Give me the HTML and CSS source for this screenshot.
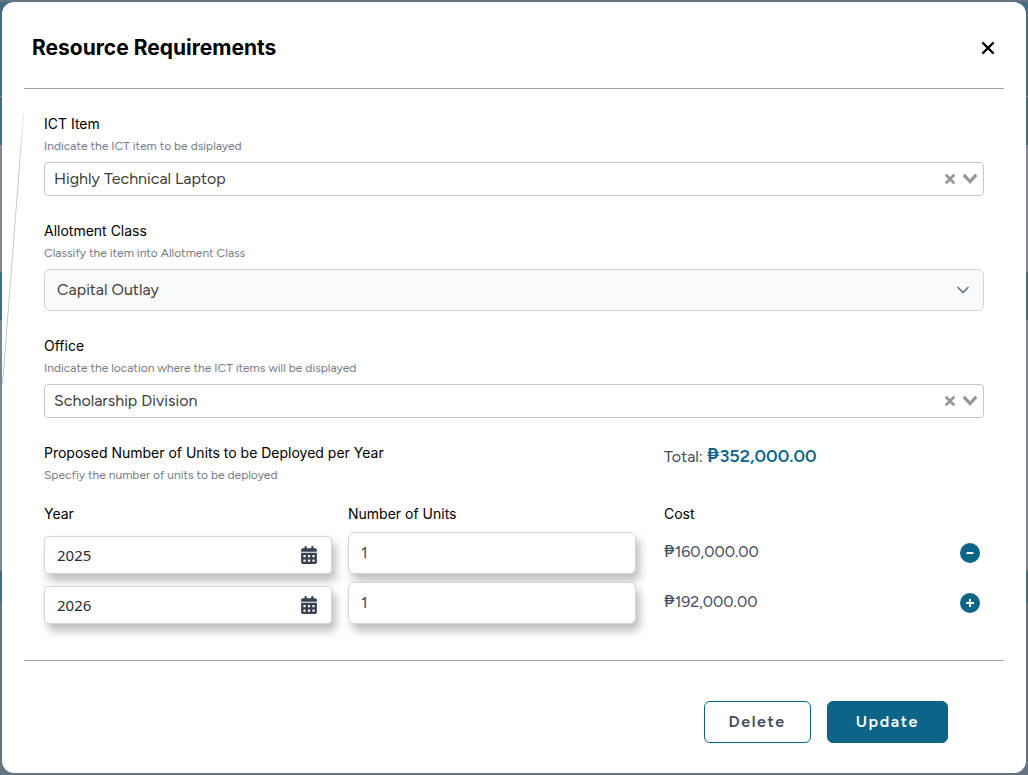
FILE: index.html
```html
<!DOCTYPE html>
<html lang="en">
<head>
<meta charset="utf-8">
<meta name="viewport" content="width=device-width, initial-scale=1">
<title>Resource Requirements</title>
<link rel="stylesheet" href="styles.css">
</head>
<body>
<svg class="defs" aria-hidden="true">
  <symbol id="clear" viewBox="0 0 10 10"><path d="M6.895455 5l2.842897-2.842898c.348864-.348863.348864-.914488 0-1.263636L9.106534.261648c-.348864-.348864-.914489-.348864-1.263636 0L5 3.104545 2.157102.261648c-.348863-.348864-.914488-.348864-1.263636 0L.261648.893466c-.348864.348864-.348864.914489 0 1.263636L3.104545 5 .261648 7.842898c-.348864.348863-.348864.914488 0 1.263636l.631818.631818c.348864.348864.914773.348864 1.263636 0L5 6.895455l2.842898 2.842897c.348863.348864.914772.348864 1.263636 0l.631818-.631818c.348864-.348864.348864-.914489 0-1.263636L6.895455 5z"/></symbol>
  <symbol id="open" viewBox="0 0 14 10"><path d="M9.211364 7.59931l4.48338-4.867229c.407008-.441854.407008-1.158247 0-1.60046l-.73712-.80023c-.407008-.441854-1.066904-.441854-1.474243 0L7 5.198617 2.51662.33139c-.407008-.441853-1.066904-.441853-1.474243 0l-.737121.80023c-.407008.441854-.407008 1.158248 0 1.600461l4.48338 4.867228L7 10l2.211364-2.40069z"/></symbol>
  <symbol id="calendar" viewBox="0 0 448 512"><path d="M128 0c17.700 0 32 14.300 32 32V64H288V32c0-17.700 14.300-32 32-32s32 14.300 32 32V64h48c26.500 0 48 21.500 48 48v48H0V112C0 85.500 21.500 64 48 64H96V32c0-17.700 14.300-32 32-32zM0 192H448V464c0 26.500-21.500 48-48 48H48c-26.500 0-48-21.500-48-48V192zm64 80v32c0 8.800 7.200 16 16 16h32c8.800 0 16-7.200 16-16V272c0-8.800-7.200-16-16-16H80c-8.800 0-16 7.200-16 16zm128 0v32c0 8.800 7.200 16 16 16h32c8.800 0 16-7.200 16-16V272c0-8.800-7.200-16-16-16H208c-8.800 0-16 7.200-16 16zm144-16c-8.800 0-16 7.200-16 16v32c0 8.800 7.200 16 16 16h32c8.800 0 16-7.200 16-16V272c0-8.800-7.200-16-16-16H336zM64 400v32c0 8.800 7.200 16 16 16h32c8.800 0 16-7.200 16-16V400c0-8.800-7.200-16-16-16H80c-8.800 0-16 7.200-16 16zm144-16c-8.800 0-16 7.200-16 16v32c0 8.800 7.200 16 16 16h32c8.800 0 16-7.200 16-16V400c0-8.800-7.200-16-16-16H208zm112 16v32c0 8.800 7.200 16 16 16h32c8.800 0 16-7.200 16-16V400c0-8.800-7.200-16-16-16H336c-8.800 0-16 7.200-16 16z"/></symbol>
</svg>
<main class="modal" role="dialog" aria-labelledby="title">
  <svg class="edge-line" viewBox="0 0 22 272" aria-hidden="true"><defs><linearGradient id="fade" x1="0" y1="0" x2="0" y2="1"><stop offset="0" stop-color="#e8e8ea"/><stop offset=".2" stop-color="#c8c8ca"/></linearGradient></defs><path d="M21.500 0L.5 270" fill="none" stroke="url(#fade)"/></svg>
  <header class="modal-header">
    <h1 id="title" class="title">Resource Requirements</h1>
    <button class="icon-button close" type="button" aria-label="Close"><svg viewBox="0 0 14 14" width="14" height="14"><path d="M2 2l10 10M12 2L2 12" fill="none" stroke="#000" stroke-width="2.400" stroke-linecap="round"/></svg></button>
  </header>
  <form>
    <div class="modal-body">
      <div class="field">
        <label class="label" for="item">ICT Item</label>
        <p class="hint">Indicate the ICT item to be dsiplayed</p>
        <div class="combo">
          <input id="item" class="combo-input" type="text" role="combobox" aria-expanded="false" value="Highly Technical Laptop">
          <button class="icon-button" type="button" aria-label="Clear item"><svg width="10" height="10"><use href="#clear"/></svg></button>
          <button class="icon-button" type="button" aria-label="Open item list"><svg width="14" height="10"><use href="#open"/></svg></button>
        </div>
      </div>
      <div class="field">
        <label class="label" for="class">Allotment Class</label>
        <p class="hint">Classify the item into Allotment Class</p>
        <div class="select-wrap">
          <select id="class" class="select"><option>Capital Outlay</option></select>
          <svg class="select-arrow" width="12" height="8" viewBox="0 0 12 8" aria-hidden="true"><path d="M1 1.500l5 5 5-5" fill="none" stroke="#6b7280" stroke-width="1.700" stroke-linecap="round" stroke-linejoin="round"/></svg>
        </div>
      </div>
      <div class="field">
        <label class="label" for="office">Office</label>
        <p class="hint">Indicate the location where the ICT items will be displayed</p>
        <div class="combo">
          <input id="office" class="combo-input" type="text" role="combobox" aria-expanded="false" value="Scholarship Division">
          <button class="icon-button" type="button" aria-label="Clear office"><svg width="10" height="10"><use href="#clear"/></svg></button>
          <button class="icon-button" type="button" aria-label="Open office list"><svg width="14" height="10"><use href="#open"/></svg></button>
        </div>
      </div>
      <section class="units">
        <div class="columns">
          <div class="wide">
            <h2 class="label">Proposed Number of Units to be Deployed per Year</h2>
            <p class="hint">Specfiy the number of units to be deployed</p>
          </div>
          <p class="total">Total: <strong class="amount">₱352,000.00</strong></p>
        </div>
        <div class="rows">
          <div class="columns">
            <span class="label" id="year">Year</span>
            <span class="label" id="count">Number of Units</span>
            <span class="label indent">Cost</span>
          </div>
          <div class="columns">
            <div class="year"><input class="year-input" type="text" aria-labelledby="year" value="2025"><button class="icon-button" type="button" aria-label="Pick year"><svg width="16" height="18"><use href="#calendar"/></svg></button></div>
            <input class="count" type="text" inputmode="numeric" aria-labelledby="count" value="1">
            <div class="cost"><span class="price">₱160,000.00</span><button class="round" type="button" aria-label="Remove year"><svg viewBox="0 0 20 20" width="20" height="20"><path d="M6.500 10h7" stroke="#fff" stroke-width="2"/></svg></button></div>
          </div>
          <div class="columns">
            <div class="year"><input class="year-input" type="text" aria-labelledby="year" value="2026"><button class="icon-button" type="button" aria-label="Pick year"><svg width="16" height="18"><use href="#calendar"/></svg></button></div>
            <input class="count" type="text" inputmode="numeric" aria-labelledby="count" value="1">
            <div class="cost"><span class="price">₱192,000.00</span><button class="round" type="button" aria-label="Add year"><svg viewBox="0 0 20 20" width="20" height="20"><path d="M6 10h8M10 6v8" stroke="#fff" stroke-width="2"/></svg></button></div>
          </div>
        </div>
      </section>
    </div>
    <footer class="actions">
      <button class="button outline" type="button">Delete</button>
      <button class="button primary" type="submit">Update</button>
    </footer>
  </form>
</main>
</body>
</html>
```
FILE: styles.css
```css
* { box-sizing: border-box; }
body {
  margin: 0;
  padding: 2px;
  min-height: 100vh;
  color: #414b5a;
  font: 16px/24px Figtree, Inter, sans-serif;
  background: linear-gradient(#667481 2px, #406d84 2px 96px, #8795a3 96px 97px, #406d84 97px 145px, #858596 145px 272px, #406d84 272px 320px, #788594 320px 571px, #406d84 571px 603px, #667481 603px);
}
h1, h2, p { margin: 0; font-weight: 400; }
input, select, button { margin: 0; font: inherit; color: inherit; }
button { cursor: pointer; }
svg { display: block; fill: currentColor; }
.defs { position: absolute; width: 0; height: 0; }
.modal {
  position: relative;
  padding: 0 22px 30px;
  border-radius: 12px;
  background: #fff;
}
.edge-line { position: absolute; top: 112px; left: 0; width: 22px; height: 272px; }
.modal-header {
  display: flex;
  align-items: center;
  justify-content: space-between;
  padding: 32px 8px 26px;
  border-bottom: 1px solid #9ca3af;
}
.title { color: #000; font: 700 21px/28px Inter, sans-serif; }
.icon-button { padding: 0; border: 0; background: none; color: #374151; }
.close { padding: 1px; }
.modal-body {
  display: grid;
  gap: 25px;
  padding: 25px 20px 36px;
  border-bottom: 1px solid #9ca3af;
}
.label { display: block; color: #000; font: 400 14px/20px Inter, sans-serif; }
.hint { margin-top: 4px; color: #747b88; font-size: 12px; line-height: 16px; }
.combo {
  display: flex;
  align-items: center;
  gap: 8px;
  height: 34px;
  margin-top: 8px;
  padding: 0 6px 0 9px;
  border: 1px solid #c6c6c6;
  border-radius: 4px;
}
.combo .icon-button { color: #979797; }
.combo-input { flex: 1; min-width: 0; padding: 0; border: 0; background: none; color: #3d3d3d; }
.select-wrap { display: grid; align-items: center; margin-top: 8px; }
.select {
  grid-area: 1 / 1;
  width: 100%;
  height: 42px;
  padding: 0 40px 0 12px;
  border: 1px solid #d1d5db;
  border-radius: 6px;
  appearance: none;
  background: #f9fafb;
  color: #404040;
}
.select-arrow { grid-area: 1 / 1; justify-self: end; margin-right: 15px; pointer-events: none; }
.units { display: grid; gap: 21px; }
.columns { display: grid; grid-template-columns: 72fr 72fr 83fr; gap: 16px; }
.wide { grid-column: span 2; }
.total { padding-left: 12px; line-height: 26px; }
.amount { color: #0c6587; font-size: 18px; font-weight: 600; }
.rows { display: grid; gap: 8px; }
.indent { padding-left: 12px; }
.year, .count {
  min-width: 0;
  border: 1px solid #d1d5db;
  background: #fff;
  box-shadow: 4px 7px 8px rgba(0, 0, 0, .25);
}
.year {
  display: flex;
  align-items: center;
  align-self: end;
  height: 38px;
  padding: 0 14px 0 12px;
  border-radius: 4px;
}
.year-input { flex: 1; min-width: 0; padding: 0; border: 0; background: none; color: #2b2b2b; font-family: "Noto Sans", sans-serif; font-size: 15px; }
.count { height: 42px; padding: 0 12px 2px; border-radius: 6px; }
.cost {
  display: flex;
  align-items: center;
  justify-content: space-between;
  padding: 0 4px 0 12px;
}
.price { padding-bottom: 2px; }
.round { padding: 0; border: 0; border-radius: 50%; background: #0c6587; }
.actions { display: flex; justify-content: flex-end; gap: 16px; padding: 40px 56px 0 0; }
.button {
  height: 42px;
  padding: 0 24px;
  border: 1px solid #0c6587;
  border-radius: 6px;
  font-weight: 600;
  letter-spacing: 0.1em;
}
.outline { background: #fff; }
.primary { padding: 0 28px; background: #0c6587; color: #fff; }
```
